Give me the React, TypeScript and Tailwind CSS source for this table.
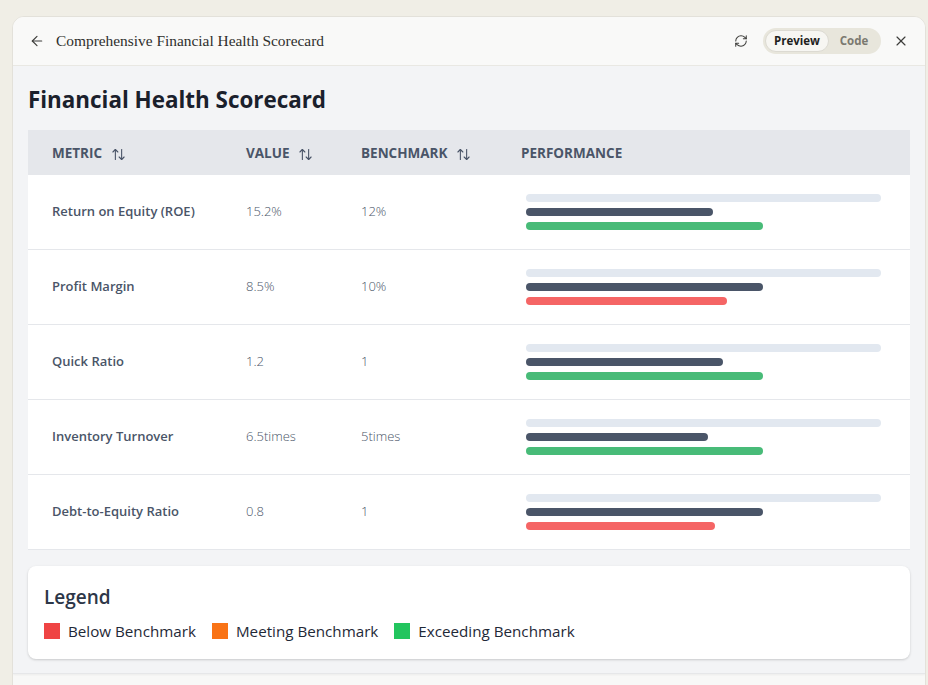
import { ArrowLeft, ArrowUpDown, RefreshCw, X } from "lucide-react";

type Row = { metric: string; value: number; benchmark: number; display: string; bench: string };

const rows: Row[] = [
  { metric: "Return on Equity (ROE)", value: 15.2, benchmark: 12, display: "15.2%", bench: "12%" },
  { metric: "Profit Margin", value: 8.5, benchmark: 10, display: "8.5%", bench: "10%" },
  { metric: "Quick Ratio", value: 1.2, benchmark: 1, display: "1.2", bench: "1" },
  { metric: "Inventory Turnover", value: 6.5, benchmark: 5, display: "6.5times", bench: "5times" },
  { metric: "Debt-to-Equity Ratio", value: 0.8, benchmark: 1, display: "0.8", bench: "1" },
];

function Bars({ value, benchmark }: { value: number; benchmark: number }) {
  const max = Math.max(value, benchmark) * 1.5;
  const good = value >= benchmark;
  return (
    <div className="mx-[5px] flex flex-col gap-[6px]">
      <div className="h-2 w-full rounded-full bg-[#e2e8f0]" />
      <div className="h-2 rounded-full bg-[#4a5568]" style={{ width: `${(benchmark / max) * 100}%` }} />
      <div
        className={good ? "h-2 rounded-full bg-[#48bb78]" : "h-2 rounded-full bg-[#f56565]"}
        style={{ width: `${(value / max) * 100}%` }}
      />
    </div>
  );
}

function HeadCell({ label, sort }: { label: string; sort?: boolean }) {
  return (
    <div className="flex items-center px-6 pt-[2px] text-[13.5px] font-bold uppercase text-[#4a5568]">
      {label}
      {sort ? <ArrowUpDown size={15} strokeWidth={1.75} className="ml-[9px] mt-[2px] shrink-0 text-[#4a5568]" /> : null}
    </div>
  );
}

export default function App() {
  return (
    <div className="h-[685px] overflow-hidden bg-[#f0eee6] pl-3 pt-4 pr-[2px] font-['Open_Sans',sans-serif]">
      <div className="h-[700px] w-[914px] overflow-hidden rounded-t-xl border border-[#e3e1da] bg-[#f8f8f7]">
        <header className="flex h-[49px] items-center border-b border-[#e9e8e3] bg-[#f9f9f8] pl-4 pr-4">
          <ArrowLeft size={16} strokeWidth={1.75} className="text-[#3d3d3a]" />
          <span className="ml-[11px] font-['Liberation_Serif',serif] text-[15.4px] text-[#2f2f2c]">
            Comprehensive Financial Health Scorecard
          </span>
          <div className="ml-auto flex items-center">
            <RefreshCw size={14} strokeWidth={1.75} className="mr-[15px] text-[#3d3d3a]" />
            <div className="flex h-[26px] w-[118px] items-center rounded-full bg-[#e8e6dc] p-[2px]">
              <div className="flex h-[22px] w-[64px] items-center justify-center rounded-full border border-[#dcdad2] bg-[#f7f6f2] text-[11.5px] font-bold text-[#1f1f1d]">
                Preview
              </div>
              <div className="flex-1 text-center text-[11.5px] font-bold text-[#7b7970]">Code</div>
            </div>
            <X size={16} strokeWidth={1.75} className="ml-[12px] text-[#3d3d3a]" />
          </div>
        </header>

        <main className="h-[608px] border-b border-[#e6e7e9] bg-[#f3f4f6] px-[15px] pt-[18px] shadow-[0_1px_2px_rgba(0,0,0,0.05)]">
          <h1 className="mb-[14px] text-[22.4px] font-bold leading-8 text-[#1a202c]">Financial Health Scorecard</h1>

          <div className="bg-white">
            <div className="grid h-[45px] grid-cols-[194px_115px_160px_1fr] bg-[#e5e7eb]">
              <HeadCell label="Metric" sort />
              <HeadCell label="Value" sort />
              <HeadCell label="Benchmark" sort />
              <HeadCell label="Performance" />
            </div>
            {rows.map((r) => (
              <div
                key={r.metric}
                className="grid h-[75px] grid-cols-[194px_115px_160px_1fr] items-center border-b border-[#e5e7eb] text-[13px]"
              >
                <div className="px-6 font-semibold text-[#4a5568]">{r.metric}</div>
                <div className="px-6 font-light text-[#4a5568]">{r.display}</div>
                <div className="px-6 font-light text-[#4a5568]">{r.bench}</div>
                <div className="px-6">
                  <Bars value={r.value} benchmark={r.benchmark} />
                </div>
              </div>
            ))}
          </div>

          <div className="mt-4 rounded-lg bg-white p-4 shadow-[0_1px_3px_rgba(0,0,0,0.12),0_1px_2px_rgba(0,0,0,0.06)]">
            <h2 className="mb-2 pt-[1px] text-[19px] font-semibold leading-7 text-[#2d3748]">Legend</h2>
            <div className="flex items-center text-[15.2px] leading-6 text-[#1f2937]">
              <span className="mr-2 h-4 w-4 bg-[#ef4444]" />
              <span className="mr-4">Below Benchmark</span>
              <span className="mr-2 h-4 w-4 bg-[#f97316]" />
              <span className="mr-4">Meeting Benchmark</span>
              <span className="mr-2 h-4 w-4 bg-[#22c55e]" />
              <span>Exceeding Benchmark</span>
            </div>
          </div>
        </main>
      </div>
    </div>
  );
}
